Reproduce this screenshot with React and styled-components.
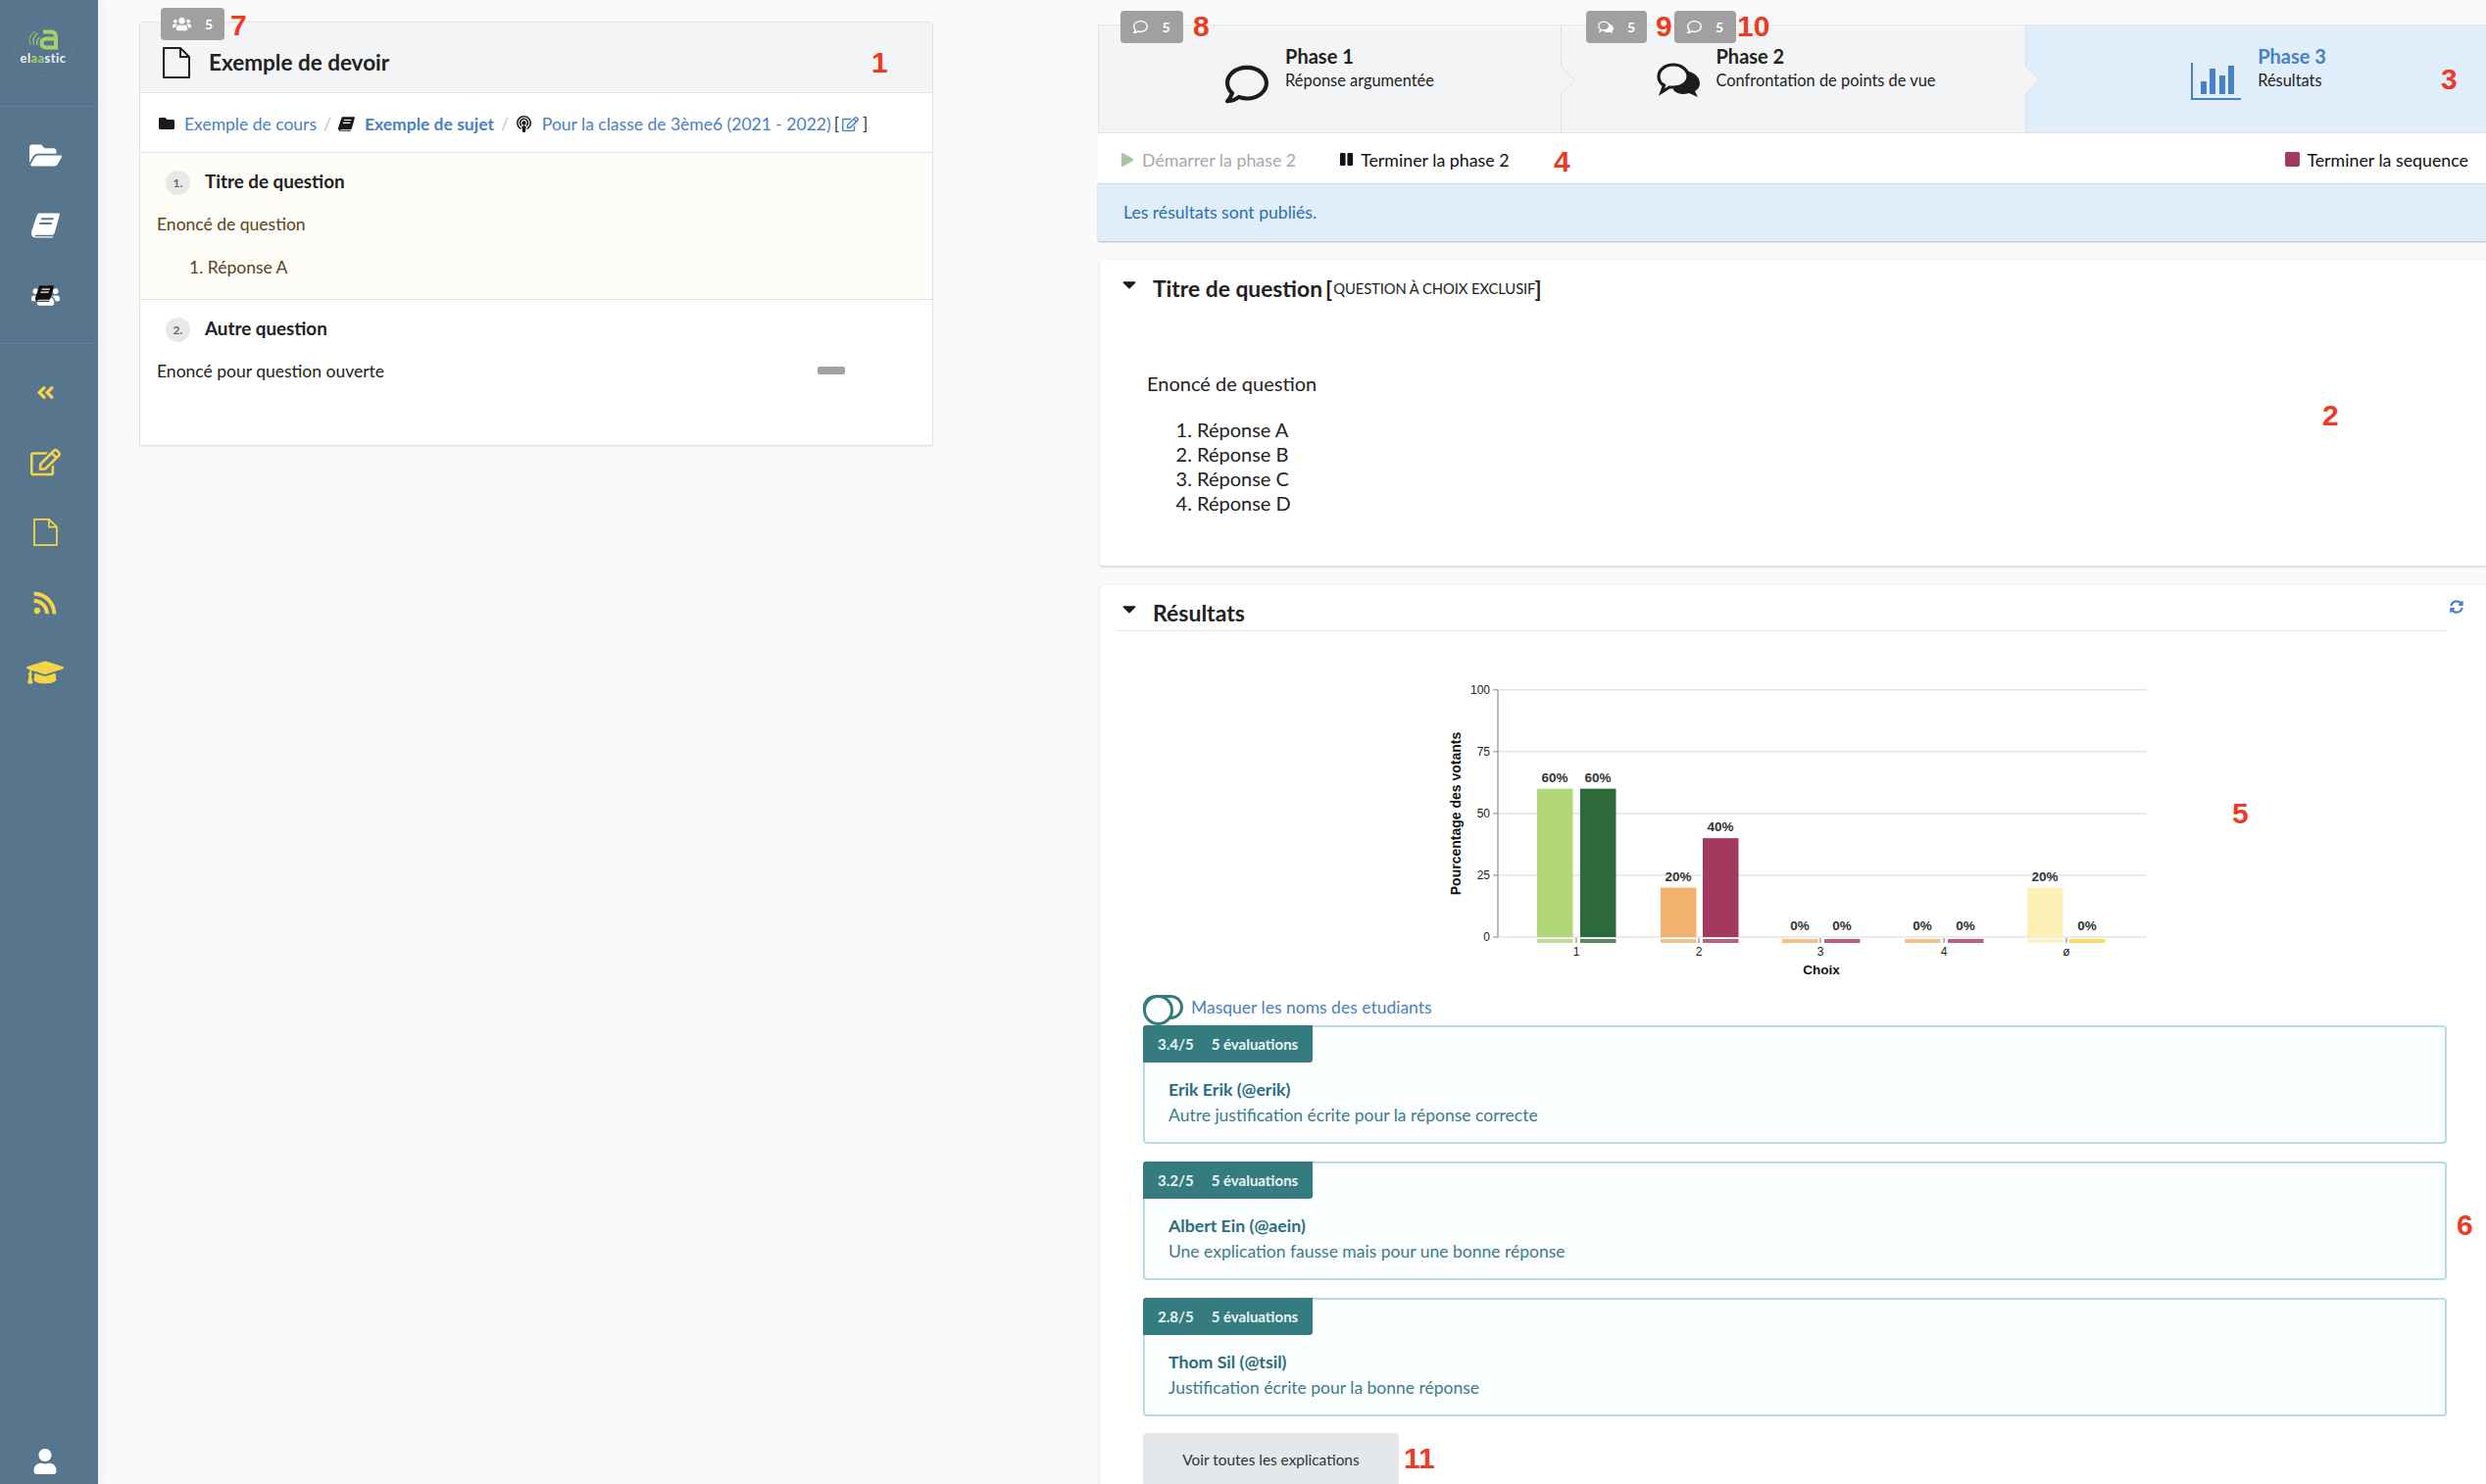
import React from "react";
import styled, { createGlobalStyle } from "styled-components";
import {
  FaFolder, FaFolderOpen, FaUsers, FaAngleDoubleLeft, FaRegEdit, FaRss,
  FaGraduationCap, FaUser, FaRegComment, FaPodcast, FaPlay, FaPause, FaSquare, FaCaretDown, FaSyncAlt,
} from "react-icons/fa";

const Global = createGlobalStyle`
  html, body { margin: 0; padding: 0; height: 100%; background: #fafafa; }
  body { font-family: Lato, "Open Sans", sans-serif; font-size: 17.5px; color: #1f1f1f; }
  * { box-sizing: border-box; }
`;

const Page = styled.div`
  position: relative; display: flex; width: 2536px; height: 1514px; overflow: hidden; background: #fafafa;
`;
const Sidebar = styled.nav`
  flex: 0 0 100px; display: flex; flex-direction: column; background: #58758e; box-shadow: 4px 0 10px rgba(0,0,0,.05);
`;
const LogoBlock = styled.div`
  height: 109px; padding: 20px 0 0 14px; border-bottom: 1px solid #64809a;
`;
const LogoInner = styled.div`
  width: 60px; height: 58px; border-radius: 50%; border: 1px solid rgba(255,255,255,.05);
  display: flex; flex-direction: column; align-items: center; padding-top: 8px;
`;
const LogoText = styled.div`
  font-size: 12.8px; font-weight: 700; letter-spacing: .5px; color: #eef3f5; line-height: 14px; margin-top: 1px;
  b { color: #a9cf6a; font-weight: 700; }
`;
const SideSection = styled.div`
  padding: ${p => (p.$last ? "14px" : "14px")} 8px 12px 0; border-bottom: ${p => (p.$last ? "none" : "1px solid #64809a")};
`;
const SideItem = styled.div`
  position: relative; height: 71.5px; display: flex; align-items: center; justify-content: center;
  color: ${p => (p.$accent ? "#f5d546" : "#ffffff")};
`;
const MiniBook = styled.span`
  position: absolute; left: 36px; top: 25px; color: #111; display: flex;
`;
const SideFoot = styled.div`
  margin-top: auto; height: 36px; color: #fff; display: flex; justify-content: center; padding-right: 8px;
`;

const LeftCol = styled.section`
  flex: 0 0 1020px; padding: 22px 0 0 42px;
`;
const Card = styled.div`
  position: relative; width: 810px; height: 433px; background: #fff; border: 1px solid #e1e3e6; border-radius: 4px 4px 0 0;
  display: flex; flex-direction: column; box-shadow: 0 1px 1px rgba(0,0,0,.05);
`;
const Badge = styled.div`
  position: absolute; z-index: 3; left: ${p => p.$x}px; top: ${p => p.$y}px; width: ${p => p.$w}px; height: 33px;
  background: #a0a0a0; border-radius: 4px; color: #fff; display: flex; align-items: center; justify-content: center;
  gap: ${p => p.$gap}px; font-size: 14px; font-weight: 700;
`;
const CardHead = styled.header`
  height: 72px; background: #f3f4f6; border-bottom: 1px solid #dfe1e4; display: flex; align-items: center;
  padding: 10px 0 0 22px; gap: 19px; font-size: 22.5px; font-weight: 700; color: #222; border-radius: 4px 4px 0 0;
`;
const Crumbs = styled.div`
  height: 61px; border-bottom: 1px solid #dfe1e4; display: flex; align-items: center; padding: 2px 0 0 19px; font-size: 17.5px;
`;
const CrumbIcon = styled.span`
  display: flex; color: #1a1a1a; margin-right: ${p => p.$mr || 10}px;
`;
const CrumbLink = styled.span`
  color: #4a80c4; font-weight: ${p => (p.$bold ? 700 : 400)}; white-space: nowrap; display: inline-flex;
`;
const CrumbSep = styled.span`
  color: #c4c4c4; margin: 0 ${p => p.$m || 7}px;
`;
const Plain = styled.span`
  color: #333; margin: 0 ${p => p.$m || 0}px; display: inline-flex; align-items: center;
`;
const Question = styled.div`
  height: ${p => p.$h}px; background: ${p => (p.$active ? "#fefcf6" : "#fff")}; color: ${p => (p.$active ? "#5a4320" : "#222")};
  border-bottom: ${p => (p.$active ? "1px solid #e0dfdc" : "none")}; padding: 17px 17px 0 17px;
`;
const QHead = styled.div`
  display: flex; align-items: center; gap: 15px; padding-left: 9px; height: 26px; font-weight: 700; color: #222; font-size: 18.8px;
`;
const QTitle = styled.span`
  margin-top: -3px;
`;
const QNum = styled.span`
  width: 25px; height: 25px; border-radius: 50%; background: #e8e8e8; color: #666; font-size: 12px; font-weight: 700;
  display: flex; align-items: center; justify-content: center;
`;
const QRow = styled.div`
  display: flex; align-items: center; justify-content: space-between; margin-top: 17px; line-height: 25px; padding-right: 72px;
`;
const QLine = styled.div`
  margin-top: 19px; line-height: 25px; padding-left: 33px;
`;
const Pill = styled.span`
  width: 28px; height: 8px; border-radius: 2px; background: #a3a3a3; margin-top: -1px;
`;

const RightCol = styled.section`
  flex: 1; min-width: 0; padding-top: 25px; display: flex; flex-direction: column;
`;
const Steps = styled.div`
  flex: none; display: grid; grid-template-columns: 473px 474px 1fr; height: 111px; border-top: 1px solid #e7e8ea; border-bottom: 1px solid #e3e4e6;
`;
const Step = styled.div`
  position: relative; background: ${p => (p.$active ? "#e0eefc" : "#f3f4f6")};
  border-left: ${p => (p.$first ? "1px solid #e5e6e8" : "none")};
  border-right: ${p => (p.$last ? "none" : "1px solid #dcdfe3")};
  display: flex; justify-content: center; padding: 17px 0 0 ${p => (p.$first ? 0 : 5)}px; gap: 17px;
  &::before, &::after {
    content: ${p => (p.$last ? "none" : '""')}; position: absolute; top: 42px; width: 14px; height: 28px;
    clip-path: polygon(0 0, 100% 50%, 0 100%);
  }
  &::before { z-index: 2; right: -15px; background: #dcdfe3; }
  &::after { z-index: 3; right: -14px; background: #f3f4f6; }
`;
const StepIcon = styled.span`
  display: flex; margin-top: 21px; height: 40px; color: #1c1c1c;
`;
const StepText = styled.div`
  display: flex; flex-direction: column;
`;
const StepTitle = styled.div`
  font-size: 20px; font-weight: 700; line-height: 28px; color: ${p => (p.$active ? "#4a80c4" : "#222")};
`;
const StepSub = styled.div`
  font-size: 16.4px; line-height: 21px; color: #222;
`;
const Toolbar = styled.div`
  flex: none; height: 51px; background: #fff; display: flex; align-items: center; padding: 2px 18px 0 23px; font-size: 17.8px; color: #111;
`;
const ToolAction = styled.span`
  display: flex; align-items: center; gap: ${p => p.$gap || 8}px; margin-left: ${p => (p.$end ? "auto" : p.$ml ? p.$ml + "px" : "0")};
  color: ${p => (p.$off ? "#a8a8a8" : "#111")};
`;
const IconTint = styled.span`
  display: flex; color: ${p => p.$c};
`;
const Message = styled.div`
  flex: none; height: 59px; background: #e0eefc; border-top: 1px solid #c9d8e6; box-shadow: 0 1px 2px rgba(60,90,120,.4); border-radius: 0 0 0 3px;
  color: #2e6fb0; display: flex; align-items: center; padding: 0 0 2px 26px; font-size: 17.6px;
`;
const Panel = styled.div`
  position: relative; margin: ${p => p.$mt}px 0 0 2px; background: #fff; border-radius: 4px 0 0 4px;
  box-shadow: 0 1px 3px rgba(0,0,0,.2); height: ${p => (p.$h ? p.$h + "px" : "auto")}; flex: ${p => (p.$grow ? 1 : "none")};
`;
const PanelHead = styled.div`
  display: flex; align-items: center; height: ${p => p.$h}px; margin: 0 41px 0 17px; padding: ${p => p.$pt || 0}px 0 0 2px; gap: 13px;
  border-bottom: ${p => (p.$line ? "1px solid #e6e6e6" : "none")};
  font-size: ${p => p.$fs}px; font-weight: 700; color: #222;
`;
const Caret = styled.span`
  display: flex; margin-top: -8px; color: #1c1c1c;
`;
const Tag = styled.span`
  font-weight: 400; font-size: 14.8px; text-transform: uppercase; margin: 0 -2px 0 0;
  letter-spacing: -.1px;
`;
const Bracket = styled.span`
  margin-left: -10px; display: inline-flex; align-items: center; gap: 1px;
`;
const Refresh = styled.span`
  margin-left: auto; margin-right: -18px; margin-top: -11px; color: #4a80c4; display: flex;
`;
const Body = styled.div`
  padding: 56px 0 0 48px; font-size: 20px; color: #222; line-height: 25px;
`;
const Answers = styled.ol`
  margin: 22px 0 0; padding: 0 0 0 51px;
`;
const ChartBox = styled.div`
  margin: 36px 0 0 318px; width: 780px; height: 335px;
`;
const ToggleRow = styled.div`
  display: flex; align-items: center; gap: 8px; margin-left: 44px; height: 25px; color: #4a80c4; font-size: 17.5px;
`;
const Toggle = styled.span`
  position: relative; width: 41px; height: 25px; border: 3px solid #357c80; border-radius: 13px; background: #fff;
  &::before {
    content: ""; position: absolute; left: -3px; top: -3px; width: 25px; height: 25px; border-radius: 50%;
    border: 3px solid #357c80; background: #fff;
  }
`;
const Explanations = styled.div`
  display: flex; flex-direction: column; gap: 18px; margin: 6px 40px 0 44px;
`;
const Expl = styled.article`
  height: 121px; background: #fafeff; border: 2px solid #b9dbe3; border-radius: 4px;
`;
const ExplBadge = styled.div`
  width: 173px; height: 38px; margin: -2px 0 0 -2px; background: #357c80; color: #e9f3f4; border-radius: 3px 0 3px 0;
  display: flex; align-items: center; padding-left: 15px; gap: 18px; font-size: 15px; font-weight: 700;
`;
const ExplName = styled.div`
  margin: 15px 0 0 24px; font-size: 17.7px; font-weight: 700; line-height: 26px; color: #2c6c80;
`;
const ExplText = styled.div`
  margin-left: 24px; font-size: 17.5px; line-height: 26px; color: #3f7a8c;
`;
const Button = styled.button`
  display: block; width: 261px; height: 54px; margin: 17px 0 0 44px; border: 0; border-radius: 4px; background: #e5e8eb;
  font-family: inherit; font-size: 15.4px; color: #333;
`;
const Mark = styled.span`
  position: absolute; z-index: 5; left: ${p => p.$x}px; top: ${p => p.$y - 15}px; font-family: "Liberation Sans", sans-serif;
  font-size: 30px; line-height: 30px; font-weight: 700; color: #ee3a24;
`;

const ChartText = styled.text`
  font-family: "Liberation Sans", Arial, sans-serif; font-size: ${p => p.$s || 12}px; font-weight: ${p => (p.$b ? 700 : 400)};
  fill: ${p => p.$c || "#222"};
`;

const Y0 = 276, PCT = 2.522;
const groups = [
  { tick: 168, label: "1", a: [128, 60, "#b2d778"], b: [172, 60, "#2c6a3b"] },
  { tick: 293, label: "2", a: [254, 20, "#f2b16f"], b: [297, 40, "#a4395f"] },
  { tick: 417, label: "3", a: [378, 0, "#f2b16f"], b: [421, 0, "#a4395f"] },
  { tick: 543, label: "4", a: [503, 0, "#f2b16f"], b: [547, 0, "#a4395f"] },
  { tick: 668, label: "ø", a: [628, 20, "#fdf1b8"], b: [671, 0, "#fcd96a"] },
];

function Chart() {
  const bar = ([x, v, c], k) => (
    <g key={k}>
      {v > 0 && <rect x={x} y={Y0 - v * PCT} width={36.5} height={v * PCT} fill={c} />}
      <rect x={x} y={Y0 + 2} width={36.5} height={4} fill={c} opacity={c === "#fcd96a" ? 1 : 0.8} />
      <ChartText x={x + 18} y={Y0 - v * PCT - 7} textAnchor="middle" $s={13.5} $b $c="#333">{v}%</ChartText>
    </g>
  );
  return (
    <svg width="780" height="335" viewBox="0 0 780 335">
      {[100, 75, 50, 25, 0].map(v => (
        <g key={v}>
          <line x1="88" x2="750" y1={Y0 - v * PCT} y2={Y0 - v * PCT} stroke="#e4e4e4" strokeWidth="1.5" />
          <line x1="83" x2="88" y1={Y0 - v * PCT} y2={Y0 - v * PCT} stroke="#888" />
          <ChartText x="80" y={Y0 - v * PCT + 4} textAnchor="end">{v}</ChartText>
        </g>
      ))}
      <line x1="88" x2="88" y1="24" y2="276" stroke="#8c8c8c" strokeWidth="1.2" />
      {groups.map(g => (
        <g key={g.label}>
          {bar(g.a, "a")}
          {bar(g.b, "b")}
          <line x1={g.tick} x2={g.tick} y1={Y0 + 1} y2={Y0 + 6} stroke="#777" />
          <ChartText x={g.tick} y={Y0 + 19} textAnchor="middle">{g.label}</ChartText>
        </g>
      ))}
      <ChartText x="418" y="314" textAnchor="middle" $s={13.5} $b $c="#111">Choix</ChartText>
      <ChartText transform="translate(50,150) rotate(-90)" textAnchor="middle" $s={14} $b $c="#111">Pourcentage des votants</ChartText>
    </svg>
  );
}

function LogoMark() {
  return (
    <svg width="32" height="22" viewBox="0 0 32 22" fill="none">
      <path d="M3 17 C1 11 3 6 8 3" stroke="#8fb35c" strokeWidth="1.2" />
      <path d="M6.5 17 C5 12 6.5 8 10.5 5" stroke="#a9cf6a" strokeWidth="1.2" />
      <path d="M10 17 C9 14 10 11 12.5 9" stroke="#a9cf6a" strokeWidth="1.2" />
      <path d="M16 3.5 H24 Q29 3.5 29 8.5 V19.5 H20 Q14.5 19.5 14.5 15 Q14.5 10.5 20 10.5 H28" stroke="#a9cf6a" strokeWidth="4" />
    </svg>
  );
}

function BarsIcon() {
  return (
    <svg width="51" height="38" viewBox="0 0 51 38" fill="#4a80c4">
      <rect x="0" y="0" width="2" height="38" />
      <rect x="0" y="36" width="51" height="2" />
      <rect x="10" y="19" width="6" height="13" />
      <rect x="19" y="6" width="6" height="26" />
      <rect x="29" y="13" width="6" height="19" />
      <rect x="38" y="3" width="6" height="29" />
    </svg>
  );
}

function FileIcon({ w, h }) {
  return (
    <svg width={w} height={h} viewBox="0 0 29 34" fill="none" stroke="currentColor" strokeWidth="2">
      <path d="M2 2 H19 L28 11 V32 H2 Z" strokeLinejoin="round" />
      <path d="M19 2 V11 H28" />
    </svg>
  );
}

function SlantBook({ w, h, page }) {
  return (
    <svg width={w} height={h} viewBox="0 0 30 26" fill="currentColor">
      <path d="M8 0 H29 Q30 0 30 1 L24.5 21 Q24 23 22 23 H6 Q3.5 23 3.5 24 Q3.5 25 6 24.6 H23 L22.5 26 H5 Q0 26 0 21 Q0 19 1 17 L6 2 Q6.5 0 8 0 Z" />
      <rect x="10" y="5" width="13" height="2" fill={page} transform="skewX(-15) translate(2 0)" />
      <rect x="8.5" y="10" width="13" height="2" fill={page} transform="skewX(-15) translate(3 0)" />
    </svg>
  );
}

function BubblePair({ w = 44, h = 36, ink = "#1c1c1c", paper = "#f3f4f6" }) {
  return (
    <svg width={w} height={h} viewBox="0 0 44 36">
      <path d="M20 8 C32 6 44 12 44 21 C44 25 42 27 39 29 L42 35 L33 31 C27 33 21 32 17 28 Z" fill={ink} />
      <path d="M17 2 C26 2 32 8 32 14 C32 20 26 25 17 25 L13 25 L5 30 L7.5 23 C3.5 21 2 18 2 14 C2 8 8 2 17 2 Z" fill={paper} stroke={ink} strokeWidth="3.2" />
    </svg>
  );
}

const explanations = [
  ["3.4/5", "Erik Erik (@erik)", "Autre justification écrite pour la réponse correcte"],
  ["3.2/5", "Albert Ein (@aein)", "Une explication fausse mais pour une bonne réponse"],
  ["2.8/5", "Thom Sil (@tsil)", "Justification écrite pour la bonne réponse"],
];

const marks = [
  ["7", 235, 26], ["1", 889, 64], ["8", 1217, 27], ["9", 1689, 27], ["10", 1772, 27], ["3", 2490, 81],
  ["4", 1585, 165], ["2", 2369, 424], ["5", 2277, 830], ["6", 2506, 1250], ["11", 1432, 1488],
];

export default function App() {
  return (
    <Page>
      <Global />
      <Sidebar>
        <LogoBlock>
          <LogoInner>
            <LogoMark />
            <LogoText>el<b>aa</b>stic</LogoText>
          </LogoInner>
        </LogoBlock>
        <SideSection>
          <SideItem><FaFolderOpen size={33} /></SideItem>
          <SideItem><SlantBook w={29} h={26} page="#58758e" /></SideItem>
          <SideItem>
            <FaUsers size={29} />
            <MiniBook><SlantBook w={19} h={17} page="#fff" /></MiniBook>
          </SideItem>
        </SideSection>
        <SideSection $last>
          <SideItem $accent><FaAngleDoubleLeft size={21} /></SideItem>
          <SideItem $accent><FaRegEdit size={31} /></SideItem>
          <SideItem $accent><FileIcon w={26} h={30} /></SideItem>
          <SideItem $accent><FaRss size={26} /></SideItem>
          <SideItem $accent><FaGraduationCap size={38} /></SideItem>
        </SideSection>
        <SideFoot><FaUser size={26} /></SideFoot>
      </Sidebar>

      <LeftCol>
        <Card>
          <Badge $x={21} $y={-15} $w={65} $gap={14}><FaUsers size={19} />5</Badge>
          <CardHead><FileIcon w={29} h={34} />Exemple de devoir</CardHead>
          <Crumbs>
            <CrumbIcon><FaFolder size={16} /></CrumbIcon>
            <CrumbLink>Exemple de cours</CrumbLink>
            <CrumbSep>/</CrumbSep>
            <CrumbIcon $mr={10}><SlantBook w={17} h={15} page="#fff" /></CrumbIcon>
            <CrumbLink $bold>Exemple de sujet</CrumbLink>
            <CrumbSep>/</CrumbSep>
            <CrumbIcon $mr={10}><FaPodcast size={17} /></CrumbIcon>
            <CrumbLink>Pour la classe de 3ème6 (2021 - 2022)</CrumbLink>
            <Plain $m={3}>[</Plain>
            <CrumbLink><FaRegEdit size={17} /></CrumbLink>
            <Plain $m={4}>]</Plain>
          </Crumbs>
          <Question $active $h={150}>
            <QHead><QNum>1.</QNum><QTitle>Titre de question</QTitle></QHead>
            <QRow>Enoncé de question</QRow>
            <QLine>1. Réponse A</QLine>
          </Question>
          <Question $h={148}>
            <QHead><QNum>2.</QNum><QTitle>Autre question</QTitle></QHead>
            <QRow>Enoncé pour question ouverte<Pill /></QRow>
          </Question>
        </Card>
      </LeftCol>

      <RightCol>
        <Badge $x={1143} $y={11} $w={64} $gap={14}><FaRegComment size={15} />5</Badge>
        <Badge $x={1618} $y={11} $w={62} $gap={14}><BubblePair w={16} h={14} ink="#fff" paper="#a0a0a0" />5</Badge>
        <Badge $x={1708} $y={11} $w={63} $gap={14}><FaRegComment size={15} />5</Badge>
        <Steps>
          <Step $first>
            <StepIcon><FaRegComment size={44} /></StepIcon>
            <StepText>
              <StepTitle>Phase 1</StepTitle>
              <StepSub>Réponse argumentée</StepSub>
            </StepText>
          </Step>
          <Step>
            <StepIcon><BubblePair /></StepIcon>
            <StepText>
              <StepTitle>Phase 2</StepTitle>
              <StepSub>Confrontation de points de vue</StepSub>
            </StepText>
          </Step>
          <Step $active $last>
            <StepIcon><BarsIcon /></StepIcon>
            <StepText>
              <StepTitle $active>Phase 3</StepTitle>
              <StepSub>Résultats</StepSub>
            </StepText>
          </Step>
        </Steps>
        <Toolbar>
          <ToolAction $off $gap={8}><IconTint $c="#a9c4a9"><FaPlay size={14} /></IconTint>Démarrer la phase 2</ToolAction>
          <ToolAction $ml={44} $gap={7}><FaPause size={15} />Terminer la phase 2</ToolAction>
          <ToolAction $end $gap={6}><IconTint $c="#a4395f"><FaSquare size={17} /></IconTint>Terminer la sequence</ToolAction>
        </Toolbar>
        <Message>Les résultats sont publiés.</Message>

        <Panel $mt={19} $h={312}>
          <PanelHead $h={58} $fs={22.8}>
            <Caret><FaCaretDown size={22} /></Caret>
            Titre de question
            <Bracket>[<Tag>Question à choix exclusif</Tag>]</Bracket>
          </PanelHead>
          <Body>
            Enoncé de question
            <Answers>
              <li>Réponse A</li>
              <li>Réponse B</li>
              <li>Réponse C</li>
              <li>Réponse D</li>
            </Answers>
          </Body>
        </Panel>

        <Panel $mt={20} $grow>
          <PanelHead $h={47} $pt={9} $line $fs={23}>
            <Caret><FaCaretDown size={22} /></Caret>
            Résultats
            <Refresh><FaSyncAlt size={14} /></Refresh>
          </PanelHead>
          <ChartBox><Chart /></ChartBox>
          <ToggleRow><Toggle />Masquer les noms des etudiants</ToggleRow>
          <Explanations>
            {explanations.map(([score, name, text]) => (
              <Expl key={name}>
                <ExplBadge><span>{score}</span><span>5 évaluations</span></ExplBadge>
                <ExplName>{name}</ExplName>
                <ExplText>{text}</ExplText>
              </Expl>
            ))}
          </Explanations>
          <Button>Voir toutes les explications</Button>
        </Panel>
      </RightCol>

      {marks.map(([t, x, y]) => <Mark key={t} $x={x} $y={y}>{t}</Mark>)}
    </Page>
  );
}
